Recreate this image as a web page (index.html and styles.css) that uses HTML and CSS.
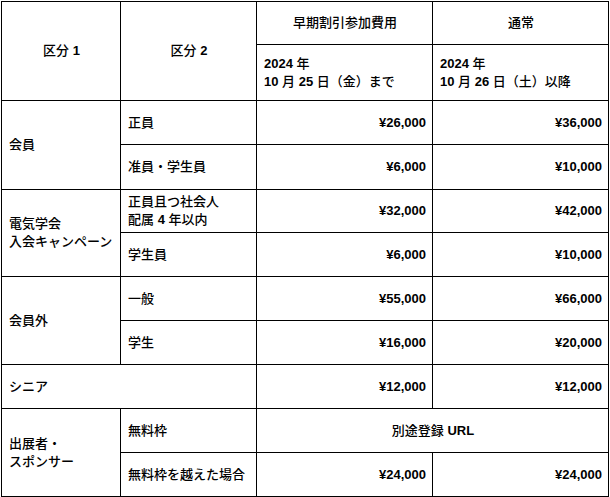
FILE: index.html
```html
<!DOCTYPE html>
<html lang="ja">
<head>
<meta charset="utf-8">
<link rel="stylesheet" href="styles.css">
</head>
<body>
<table class="fees">
  <colgroup>
    <col class="c1"><col class="c2"><col class="c3"><col class="c4">
  </colgroup>
  <tr class="h1">
    <th rowspan="2" class="center">区分 <span class="lat">1</span></th>
    <th rowspan="2" class="center">区分 <span class="lat">2</span></th>
    <th class="center">早期割引参加費用</th>
    <th class="center">通常</th>
  </tr>
  <tr class="h2">
    <th class="left"><span class="lat">2024</span> 年<br><span class="lat">10</span> 月 <span class="lat">25</span> 日（金）まで</th>
    <th class="left"><span class="lat">2024</span> 年<br><span class="lat">10</span> 月 <span class="lat">26</span> 日（土）以降</th>
  </tr>
  <tr class="r44">
    <td rowspan="2">会員</td>
    <td>正員</td>
    <td class="num">¥26,000</td>
    <td class="num">¥36,000</td>
  </tr>
  <tr class="r45">
    <td>准員・学生員</td>
    <td class="num">¥6,000</td>
    <td class="num">¥10,000</td>
  </tr>
  <tr class="r43">
    <td rowspan="2">電気学会<br>入会キャンペーン</td>
    <td>正員且つ社会人<br>配属 <span class="lat">4</span> 年以内</td>
    <td class="num">¥32,000</td>
    <td class="num">¥42,000</td>
  </tr>
  <tr class="r44">
    <td>学生員</td>
    <td class="num">¥6,000</td>
    <td class="num">¥10,000</td>
  </tr>
  <tr class="r44">
    <td rowspan="2">会員外</td>
    <td>一般</td>
    <td class="num">¥55,000</td>
    <td class="num">¥66,000</td>
  </tr>
  <tr class="r44">
    <td>学生</td>
    <td class="num">¥16,000</td>
    <td class="num">¥20,000</td>
  </tr>
  <tr class="r44">
    <td colspan="2">シニア</td>
    <td class="num">¥12,000</td>
    <td class="num">¥12,000</td>
  </tr>
  <tr class="r44">
    <td rowspan="2">出展者・<br>スポンサー</td>
    <td>無料枠</td>
    <td colspan="2" class="center">別途登録 <span class="lat">URL</span></td>
  </tr>
  <tr class="r44">
    <td>無料枠を越えた場合</td>
    <td class="num">¥24,000</td>
    <td class="num">¥24,000</td>
  </tr>
</table>
</body>
</html>
```
FILE: styles.css
```css
html, body {
  margin: 0;
  padding: 0;
  background: #fff;
}
body {
  padding: 1px 0 0 1px;
  font-family: "Liberation Sans", "Noto Sans CJK JP", sans-serif;
  font-size: 13px;
  color: #000;
}
.fees {
  border-collapse: collapse;
  table-layout: fixed;
  width: 608px;
}
.c1 { width: 119px; }
.c2 { width: 136px; }
.c3 { width: 176px; }
.c4 { width: 176px; }
.fees th, .fees td {
  border: 1px solid #000;
  padding: 0 6px 0 7px;
  font-weight: 500;
  text-align: left;
  vertical-align: middle;
  line-height: 18px;
}
.fees .center { text-align: center; }
.fees .num { text-align: right; font-weight: 700; }
.lat { font-weight: 700; }
.h1 { height: 43px; }
.h2 { height: 56px; }
.r43 { height: 43px; }
.r44 { height: 44px; }
.r45 { height: 45px; }
```
